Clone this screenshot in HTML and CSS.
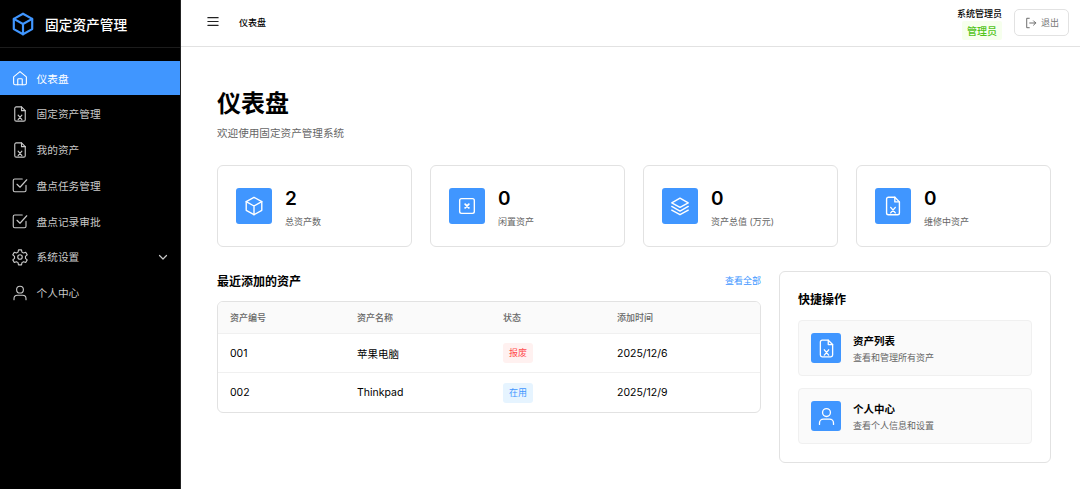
FILE: index.html
```html
<!DOCTYPE html>
<html lang="zh-CN">
<head>
    <meta charset="UTF-8">
    <meta name="viewport" content="width=device-width, initial-scale=1.0">
    <title>固定资产管理</title>
    <link rel="stylesheet" href="styles.css">
</head>
<body>
    <svg class="icon-defs" width="0" height="0">
        <symbol id="i-box" viewBox="0 0 24 24"><path d="M12 2.500l8.500 4.800v9.400L12 21.500l-8.500-4.800V7.300z"/><path d="M3.500 7.300L12 12l8.500-4.700M12 12v9.500"/></symbol>
        <symbol id="i-home" viewBox="0 0 24 24"><path d="M3.500 10.500L12 3.500l8.500 7V19a2 2 0 0 1-2 2h-13a2 2 0 0 1-2-2z"/><path d="M9 21v-7a1 1 0 0 1 1-1h4a1 1 0 0 1 1 1v7"/></symbol>
        <symbol id="i-file" viewBox="0 0 24 24"><path d="M14 2.500H7a2 2 0 0 0-2 2v15a2 2 0 0 0 2 2h10a2 2 0 0 0 2-2V7.500z"/><path d="M14 2.500v5h5M9.500 13.500l5 6M14.500 13.500l-5 6"/></symbol>
        <symbol id="i-check" viewBox="0 0 24 24"><path d="M20 12.500V19a2 2 0 0 1-2 2H5a2 2 0 0 1-2-2V6a2 2 0 0 1 2-2h10"/><path d="M8 11l4 4 9-10"/></symbol>
        <symbol id="i-gear" viewBox="0 0 24 24"><circle cx="12" cy="12" r="3"/><path d="M10 2.500h4l.6 3 2.100 1.200 2.900-1 2 3.500-2.300 2v2.600l2.300 2-2 3.500-2.900-1-2.100 1.200-.6 3h-4l-.6-3-2.100-1.200-2.900 1-2-3.500 2.300-2v-2.600l-2.300-2 2-3.500 2.900 1 2.100-1.200z"/></symbol>
        <symbol id="i-user" viewBox="0 0 24 24"><circle cx="12" cy="7.500" r="4.500"/><path d="M4 21v-1.500A4.500 4.500 0 0 1 8.500 15h7a4.500 4.500 0 0 1 4.500 4.500V21"/></symbol>
        <symbol id="i-idle" viewBox="0 0 24 24"><rect x="4" y="4" width="16" height="16" rx="2"/><path d="M10 10l4 4M14 10l-4 4" stroke-width="2"/></symbol>
        <symbol id="i-layers" viewBox="0 0 24 24"><path d="M12 3.500l9 5-9 5-9-5z"/><path d="M3 12.500l9 5 9-5M3 16.500l9 5 9-5"/></symbol>
    </svg>

    <div class="app">
        <aside class="sidebar">
            <div class="brand">
                <svg class="brand-icon"><use href="#i-box"/></svg>
                <span>固定资产管理</span>
            </div>
            <nav class="menu">
                <a class="menu-item active"><svg class="menu-icon"><use href="#i-home"/></svg>仪表盘</a>
                <a class="menu-item"><svg class="menu-icon"><use href="#i-file"/></svg>固定资产管理</a>
                <a class="menu-item"><svg class="menu-icon"><use href="#i-file"/></svg>我的资产</a>
                <a class="menu-item"><svg class="menu-icon"><use href="#i-check"/></svg>盘点任务管理</a>
                <a class="menu-item"><svg class="menu-icon"><use href="#i-check"/></svg>盘点记录审批</a>
                <a class="menu-item"><svg class="menu-icon"><use href="#i-gear"/></svg>系统设置
                    <svg class="chevron" viewBox="0 0 12 12"><path d="M2.500 4.500L6 8l3.500-3.500"/></svg>
                </a>
                <a class="menu-item"><svg class="menu-icon"><use href="#i-user"/></svg>个人中心</a>
            </nav>
        </aside>

        <div class="main">
            <header class="topbar">
                <svg class="hamburger" viewBox="0 0 14 12"><path d="M1 1.500h12M1 6h12M1 10.500h12"/></svg>
                <span class="crumb">仪表盘</span>
                <div class="user">
                    <span class="user-name">系统管理员</span>
                    <span class="user-role">管理员</span>
                </div>
                <button class="logout">
                    <svg viewBox="0 0 14 14"><path d="M5 1.500H2v11h3M5.500 7h7M10 4.500L12.500 7 10 9.500"/></svg>
                    退出
                </button>
            </header>

            <main class="content">
                <h1>仪表盘</h1>
                <p class="subtitle">欢迎使用固定资产管理系统</p>

                <section class="stats">
                    <div class="stat-card">
                        <div class="icon-tile large"><svg><use href="#i-box"/></svg></div>
                        <div class="stat-text">
                            <div class="stat-value">2</div>
                            <div class="stat-label">总资产数</div>
                        </div>
                    </div>
                    <div class="stat-card">
                        <div class="icon-tile large"><svg><use href="#i-idle"/></svg></div>
                        <div class="stat-text">
                            <div class="stat-value">0</div>
                            <div class="stat-label">闲置资产</div>
                        </div>
                    </div>
                    <div class="stat-card">
                        <div class="icon-tile large"><svg><use href="#i-layers"/></svg></div>
                        <div class="stat-text">
                            <div class="stat-value">0</div>
                            <div class="stat-label">资产总值 (万元)</div>
                        </div>
                    </div>
                    <div class="stat-card">
                        <div class="icon-tile large"><svg><use href="#i-file"/></svg></div>
                        <div class="stat-text">
                            <div class="stat-value">0</div>
                            <div class="stat-label">维修中资产</div>
                        </div>
                    </div>
                </section>

                <section class="lower">
                    <div class="recent">
                        <div class="recent-head">
                            <h2>最近添加的资产</h2>
                            <a class="view-all">查看全部</a>
                        </div>
                        <table class="asset-table">
                            <thead>
                                <tr><th class="col-code">资产编号</th><th class="col-name">资产名称</th><th class="col-state">状态</th><th>添加时间</th></tr>
                            </thead>
                            <tbody>
                                <tr><td>001</td><td>苹果电脑</td><td><span class="tag tag-red">报废</span></td><td>2025/12/6</td></tr>
                                <tr><td>002</td><td>Thinkpad</td><td><span class="tag tag-blue">在用</span></td><td>2025/12/9</td></tr>
                            </tbody>
                        </table>
                    </div>

                    <div class="quick">
                        <h2>快捷操作</h2>
                        <div class="quick-item">
                            <div class="icon-tile"><svg><use href="#i-file"/></svg></div>
                            <div class="quick-text">
                                <div class="quick-title">资产列表</div>
                                <div class="quick-desc">查看和管理所有资产</div>
                            </div>
                        </div>
                        <div class="quick-item">
                            <div class="icon-tile"><svg><use href="#i-user"/></svg></div>
                            <div class="quick-text">
                                <div class="quick-title">个人中心</div>
                                <div class="quick-desc">查看个人信息和设置</div>
                            </div>
                        </div>
                    </div>
                </section>
            </main>
        </div>
    </div>
</body>
</html>
```

FILE: styles.css
```css
* {
    box-sizing: border-box;
}
body {
    margin: 0;
    font-family: Inter, "Noto Sans CJK SC", sans-serif;
    color: #000;
    background-color: #fff;
}
svg {
    fill: none;
    stroke: currentColor;
    stroke-linecap: round;
    stroke-linejoin: round;
}
.icon-defs {
    position: absolute;
}
h1, h2, p {
    margin: 0;
}
.app {
    display: flex;
    height: 489px;
    overflow: hidden;
}

/* sidebar */
.sidebar {
    width: 181px;
    flex-shrink: 0;
    background-color: #000;
    border-right: 1px solid #222;
}
.brand {
    display: flex;
    align-items: center;
    gap: 9px;
    height: 48px;
    padding-left: 10px;
    border-bottom: 1px solid #1c1c1c;
    color: #fff;
    font-size: 13.700px;
    font-weight: 500;
}
.brand-icon {
    width: 26px;
    height: 26px;
    color: #4096ff;
    stroke-width: 2;
}
.menu {
    display: flex;
    flex-direction: column;
    gap: 1.800px;
    padding-top: 13px;
}
.menu-item {
    display: flex;
    align-items: center;
    gap: 8px;
    height: 34px;
    padding-left: 10.500px;
    color: #c9c9c9;
    font-size: 10.700px;
}
.menu-item.active {
    background-color: #4096ff;
    color: #fff;
}
.menu-icon {
    width: 18px;
    height: 18px;
    stroke-width: 1.500;
}
.chevron {
    width: 12px;
    height: 12px;
    margin-left: auto;
    margin-right: 11.500px;
    stroke-width: 1.200;
}

/* top bar */
.main {
    flex: 1;
    min-width: 0;
}
.topbar {
    display: flex;
    align-items: center;
    height: 47px;
    padding: 0 11px 0 26px;
    border-bottom: 1px solid #e2e2e2;
}
.hamburger {
    width: 12px;
    height: 11px;
    margin-bottom: 4px;
    stroke-width: 1.300;
    color: #222;
}
.crumb {
    margin-left: 20px;
    margin-bottom: 2px;
    font-size: 9px;
    font-weight: 500;
}
.user {
    display: flex;
    flex-direction: column;
    align-items: flex-end;
    gap: 1px;
    margin-left: auto;
    margin-right: 12px;
}
.user-name {
    font-size: 9px;
    font-weight: 500;
}
.user-role {
    padding: 2px 5px;
    border-radius: 2px;
    background-color: #f6ffed;
    color: #52c41a;
    font-size: 10px;
    font-weight: 500;
}
.logout {
    display: flex;
    align-items: center;
    gap: 4px;
    width: 55px;
    height: 27px;
    margin-bottom: 1px;
    padding: 0 0 0 10px;
    border: 1px solid #e2e2e2;
    border-radius: 5px;
    background-color: #fff;
    color: #777;
    font-family: inherit;
    font-size: 9px;
}
.logout svg {
    width: 12px;
    height: 12px;
    stroke-width: 1;
    color: #555;
}

/* page */
.content {
    padding: 40px 29px 0 36px;
}
h1 {
    font-size: 24px;
    font-weight: 600;
    line-height: 33px;
}
.subtitle {
    margin-top: 6px;
    color: #666;
    font-size: 10.600px;
    line-height: 16px;
}
.stats {
    display: grid;
    grid-template-columns: repeat(4, 1fr);
    gap: 18px;
    margin-top: 23px;
}
.stat-card {
    display: flex;
    align-items: center;
    gap: 13px;
    height: 82px;
    padding-left: 18px;
    border: 1px solid #e2e2e2;
    border-radius: 6px;
}
.icon-tile {
    display: flex;
    align-items: center;
    justify-content: center;
    flex-shrink: 0;
    width: 30px;
    height: 30px;
    border-radius: 3px;
    background-color: #4096ff;
    color: #fff;
}
.icon-tile svg {
    width: 21px;
    height: 21px;
    stroke-width: 1.500;
}
.icon-tile.large {
    width: 36px;
    height: 36px;
}
.icon-tile.large svg {
    width: 22px;
    height: 22px;
}
.stat-text {
    padding-top: 3px;
}
.stat-value {
    font-size: 19px;
    font-weight: 600;
    line-height: 24px;
}
.stat-label {
    margin-top: 4px;
    color: #666;
    font-size: 9px;
    line-height: 14px;
}

/* lower panels */
.lower {
    display: grid;
    grid-template-columns: 2fr 1fr;
    gap: 18px;
    margin-top: 24px;
    align-items: start;
}
h2 {
    font-size: 12px;
    font-weight: 600;
}
.recent-head {
    display: flex;
    align-items: center;
    justify-content: space-between;
    height: 18px;
}
.view-all {
    color: #4096ff;
    font-size: 9px;
}
.asset-table {
    width: 100%;
    margin-top: 12px;
    border: 1px solid #e2e2e2;
    border-radius: 6px;
    border-collapse: separate;
    border-spacing: 0;
    overflow: hidden;
    font-size: 10.500px;
    table-layout: fixed;
}
.asset-table th,
.asset-table td {
    padding: 0 12px;
    text-align: left;
}
.asset-table th {
    height: 32px;
    background-color: #fafafa;
    color: #666;
    font-size: 9px;
    font-weight: 500;
    border-bottom: 1px solid #f0f0f0;
}
.asset-table td {
    height: 39px;
    border-bottom: 1px solid #f0f0f0;
}
.asset-table tr:last-child td {
    border-bottom: none;
}
.col-code {
    width: 127px;
}
.col-name {
    width: 146px;
}
.col-state {
    width: 114px;
}
.tag {
    display: inline-block;
    padding: 2px 6px;
    border-radius: 3px;
    font-size: 9px;
    line-height: 16px;
}
.tag-red {
    background-color: #fff1f0;
    color: #ff4d4f;
}
.tag-blue {
    background-color: #e6f4ff;
    color: #4096ff;
}
.quick {
    height: 192px;
    padding: 20px 18px 0;
    border: 1px solid #e2e2e2;
    border-radius: 6px;
}
.quick h2 {
    line-height: 16px;
}
.quick-item {
    display: flex;
    align-items: center;
    gap: 12px;
    height: 56px;
    margin-top: 12px;
    padding-left: 12px;
    border: 1px solid #f0f0f0;
    border-radius: 4px;
    background-color: #fafafa;
}
.quick-text {
    padding-top: 2px;
}
.quick-title {
    font-size: 10.500px;
    font-weight: 600;
    line-height: 14px;
}
.quick-desc {
    margin-top: 2px;
    color: #666;
    font-size: 9px;
    line-height: 13px;
}
```
